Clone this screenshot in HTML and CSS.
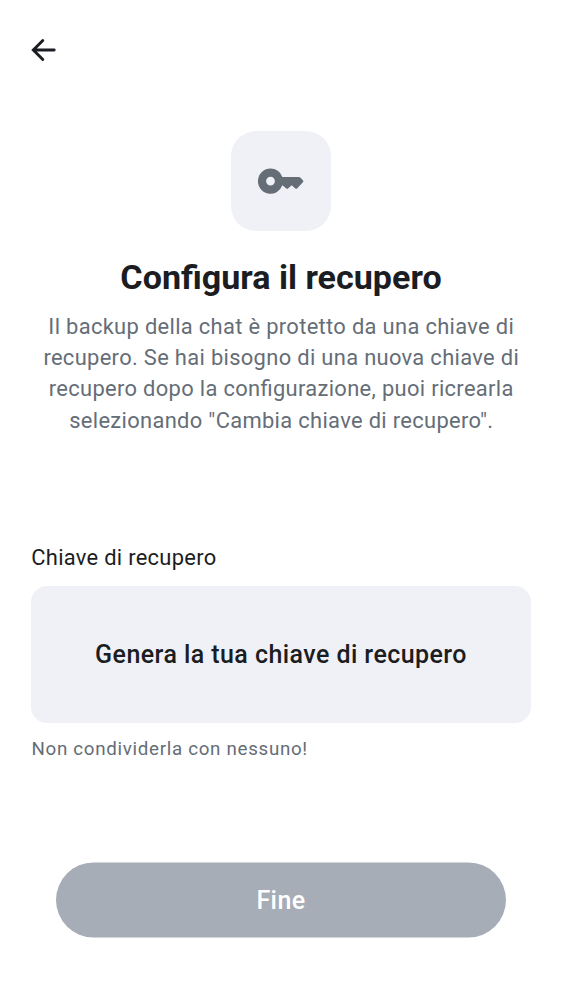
FILE: index.html
```html
<!DOCTYPE html>
<html lang="it">
<head>
<meta charset="utf-8">
<title>Configura il recupero</title>
<link rel="stylesheet" href="styles.css">
</head>
<body>
<main class="screen">
  <header class="topbar">
    <svg class="back" viewBox="0 0 25 24"><path d="M11.800 2.500 2.300 12 11.800 21.500M2.800 12H23.200"/></svg>
  </header>
  <section class="hero">
    <div class="tile">
      <svg class="key" viewBox="0 0 46 26"><path fill-rule="evenodd" d="M12.500.500A12.600 12.600 0 1 0 24.400 17.300L28.300 20.600Q29.200 21.300 30 20.600L33.700 17.200 37.300 20.400Q38.200 21.200 39.100 20.400L44.900 14.300Q45.700 13.300 44.900 12.300L42.300 9.600Q41.700 9 41 9H24.400A12.600 12.600 0 0 0 12.500.500ZM12.500 8.700a4.400 4.400 0 1 1 0 8.800 4.400 4.400 0 0 1 0-8.800Z"/></svg>
    </div>
    <h1 class="title">Configura il recupero</h1>
    <p class="description">Il backup della chat è protetto da una chiave di<br>recupero. Se hai bisogno di una nuova chiave di<br>recupero dopo la configurazione, puoi ricrearla<br>selezionando "Cambia chiave di recupero".</p>
  </section>
  <section class="field">
    <div class="label">Chiave di recupero</div>
    <button class="generate">Genera la tua chiave di recupero</button>
    <div class="hint">Non condividerla con nessuno!</div>
  </section>
  <button class="done">Fine</button>
</main>
</body>
</html>
```
FILE: styles.css
```css
* { box-sizing: border-box; }
body { margin: 0; background: #fff; font-family: Roboto, sans-serif; color: #1b1d22; }
button { border: 0; font-family: inherit; }
.screen { height: 1000px; padding: 0 31px; display: flex; flex-direction: column; }
.topbar { height: 131px; padding-top: 38px; }
.back { display: block; width: 25px; height: 24px; fill: none; stroke: #1b1d22; stroke-width: 2.900; stroke-linecap: round; }
.hero { height: 415px; display: flex; flex-direction: column; align-items: center; text-align: center; }
.tile { width: 100px; height: 100px; border-radius: 25px; background: #f0f1f6; display: grid; place-items: center; }
.key { width: 46px; height: 26px; fill: #656d77; }
.title { margin: 25px 0 0; font-size: 34.100px; line-height: 42px; font-weight: 700; white-space: nowrap; }
.description { margin: 12.900px 0 0; padding-left: .5px; font-size: 21.900px; line-height: 31.250px; letter-spacing: .33px; font-feature-settings: "liga" 1; color: #656d77; white-space: nowrap; }
.label { height: 40px; padding-left: .3px; font-size: 21.900px; line-height: 24px; letter-spacing: .29px; }
.generate { display: block; width: 100%; height: 137px; border-radius: 16px; background: #f0f1f6; color: #1b1d22; font-size: 25px; font-weight: 500; letter-spacing: .43px; }
.hint { margin-top: 14px; padding-left: .5px; font-size: 18.750px; line-height: 24px; letter-spacing: .69px; color: #656d77; }
.done { width: 450px; height: 75px; margin: 101px auto 0; border-radius: 38px; background: #a6adb7; color: #fff; font-size: 25px; font-weight: 500; letter-spacing: .43px; transform: translateY(.5px); }
```
